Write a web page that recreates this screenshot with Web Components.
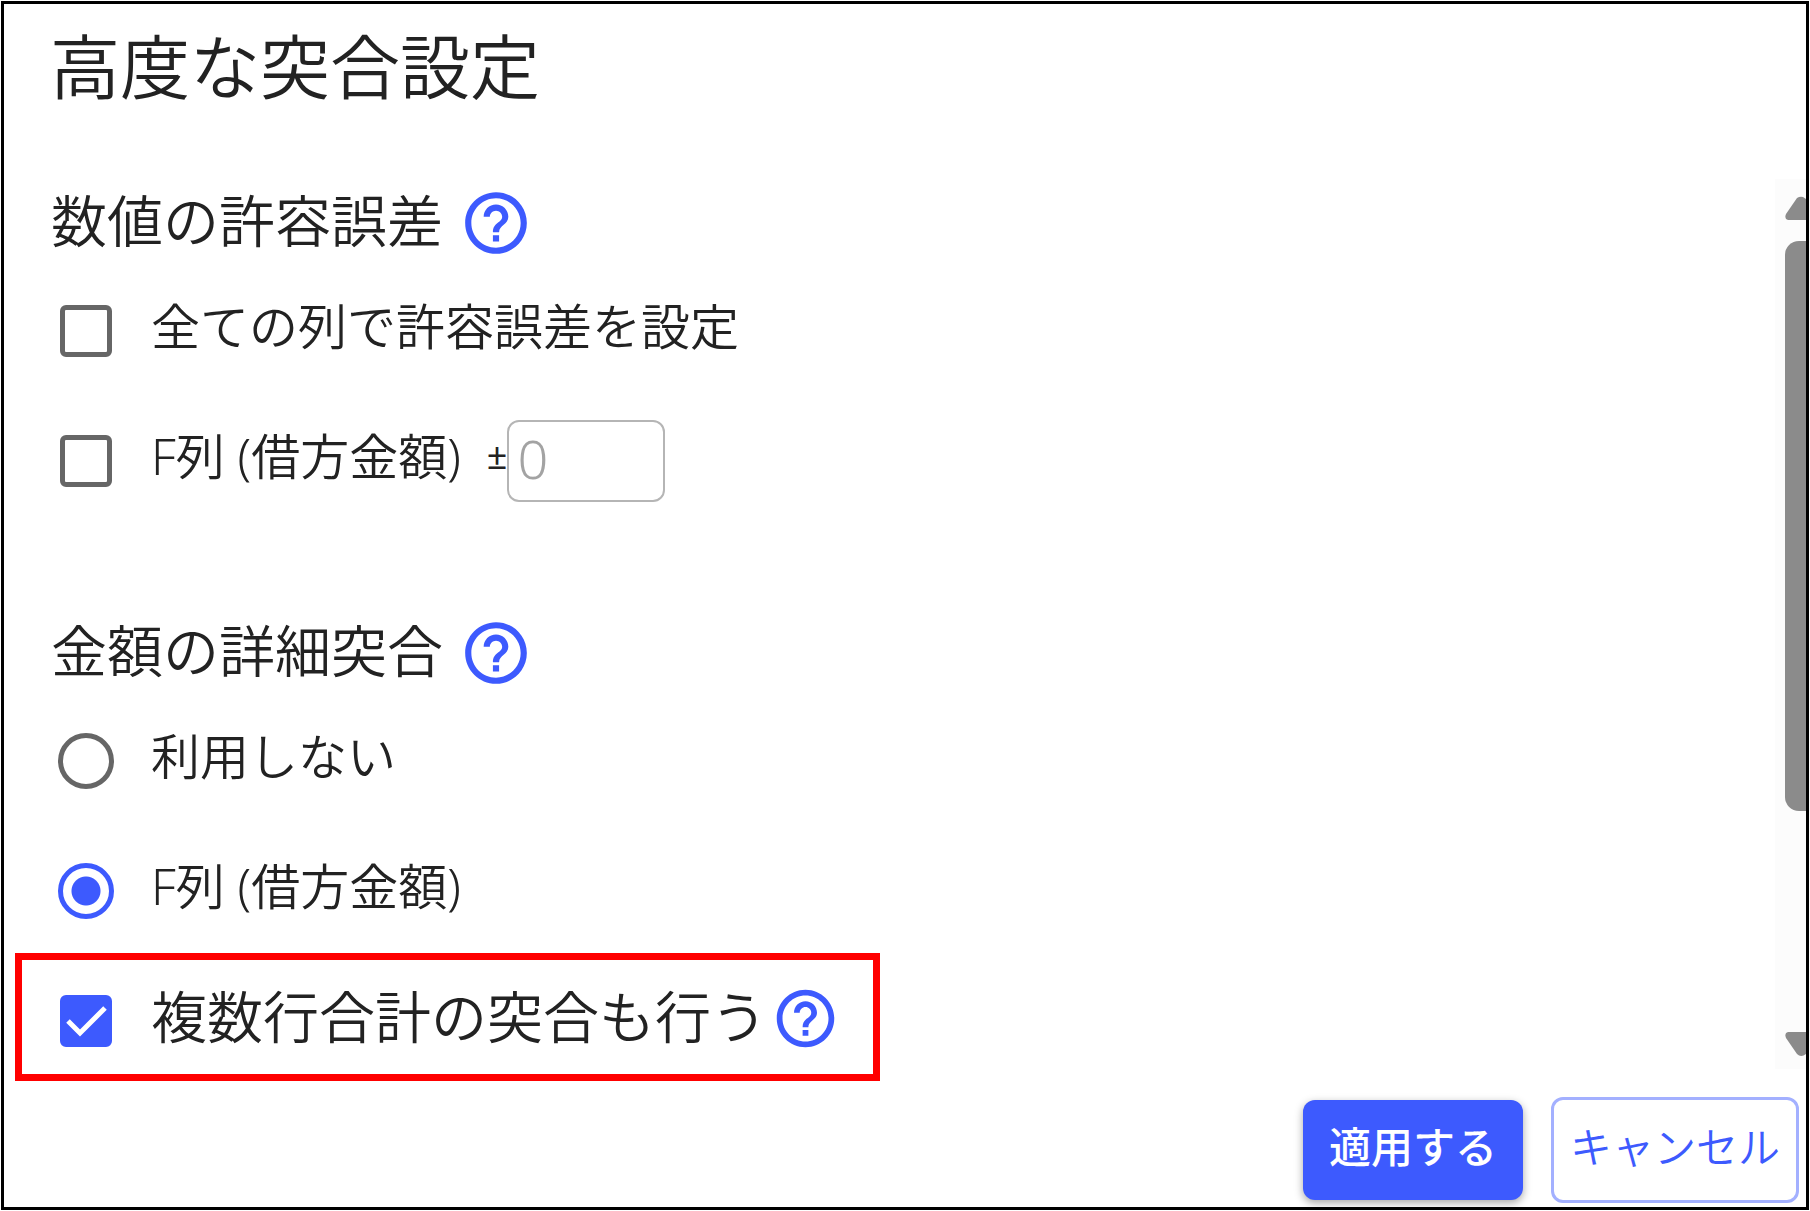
<!DOCTYPE html>
<html lang="ja">
<head>
<meta charset="utf-8">
<meta name="viewport" content="width=device-width, initial-scale=1">
<title>高度な突合設定</title>
<style>
    body {
        margin: 0;
        background: #fff;
        color: #222;
        font-family: "Noto Sans", "Noto Sans CJK JP", sans-serif;
        font-weight: 400;
        --accent: #3d5afe;
    }
</style>
</head>
<body>
<settings-dialog>
    <span slot="title">高度な突合設定</span>

    <settings-section heading="数値の許容誤差">
        <option-row type="checkbox">全ての列で許容誤差を設定</option-row>
        <option-row type="checkbox">F列 (借方金額)<tolerance-field slot="extra"></tolerance-field></option-row>
    </settings-section>

    <settings-section heading="金額の詳細突合">
        <option-row type="radio">利用しない</option-row>
        <option-row type="radio" checked>F列 (借方金額)</option-row>
        <option-row class="highlight" type="checkbox" checked>複数行合計の突合も行う<help-button slot="extra" small></help-button></option-row>
    </settings-section>

    <action-button slot="actions" variant="primary">適用する</action-button>
    <action-button slot="actions">キャンセル</action-button>
</settings-dialog>

<script>
class SettingsDialog extends HTMLElement {
    constructor() {
        super();
        this.attachShadow({ mode: 'open' });
    }

    connectedCallback() {
        this.shadowRoot.innerHTML = `
            <style>
                :host {
                    display: flex;
                    flex-direction: column;
                    box-sizing: border-box;
                    min-height: calc(100vh - 2px);
                    margin: 1px;
                    border: 3px solid #000;
                    background: #fff;
                }
                header { padding: 23px 46px 72px; }
                h1 {
                    margin: 0;
                    font-size: 70px;
                    line-height: 80px;
                    font-weight: 350;
                }
                .body { display: flex; }
                .content { flex: 1; min-width: 0; }
                footer {
                    display: flex;
                    justify-content: flex-end;
                    align-items: center;
                    gap: 28px;
                    padding: 16px 7px 3px;
                }
            </style>
            <header><h1><slot name="title"></slot></h1></header>
            <div class="body">
                <div class="content"><slot></slot></div>
                <scroll-rail></scroll-rail>
            </div>
            <footer><slot name="actions"></slot></footer>
        `;
    }
}

class ScrollRail extends HTMLElement {
    constructor() {
        super();
        this.attachShadow({ mode: 'open' });
    }

    connectedCallback() {
        this.setAttribute('aria-hidden', 'true');
        this.shadowRoot.innerHTML = `
            <style>
                :host {
                    display: flex;
                    flex-direction: column;
                    box-sizing: border-box;
                    width: 31px;
                    margin-bottom: 12px;
                    padding: 17px 0 13px 10px;
                    background: #fcfcfc;
                }
                svg { display: block; width: 21px; height: 24px; fill: #8b8b8b; }
                .track { flex: 1; padding: 21px 0; }
                .thumb {
                    height: 74%;
                    border-radius: 14px 0 0 14px;
                    background: #8b8b8b;
                }
            </style>
            <svg viewBox="0 0 21 24"><path d="M12 2Q15 0 18 1L21 3V24H3Q-1 23 1 18Z"/></svg>
            <div class="track"><div class="thumb"></div></div>
            <svg viewBox="0 0 21 24"><path d="M3 0H21V22Q16 26 12 22L1 6Q-1 1 3 0Z"/></svg>
        `;
    }
}

class SettingsSection extends HTMLElement {
    constructor() {
        super();
        this.attachShadow({ mode: 'open' });
    }

    connectedCallback() {
        this.shadowRoot.innerHTML = `
            <style>
                :host { display: block; }
                :host(:not(:first-of-type)) { margin-top: 83px; }
                .heading {
                    display: flex;
                    align-items: center;
                    gap: 16px;
                    height: 87px;
                    padding-left: 47px;
                }
                h2 {
                    margin: 0;
                    padding-bottom: 6px;
                    font-size: 56px;
                    line-height: 80px;
                    font-weight: 350;
                }
                ::slotted(.highlight) {
                    box-sizing: border-box;
                    width: fit-content;
                    height: 128px;
                    margin: -3px 0 0 11px;
                    padding: 8px 33px 0 36px;
                    border: 7px solid #f00;
                    font-size: 56px;
                }
            </style>
            <div class="heading"><h2></h2><help-button></help-button></div>
            <slot></slot>
        `;
        this.shadowRoot.querySelector('h2').textContent = this.getAttribute('heading');

        // radios live in separate shadow roots, so exclusivity is handled here
        this.addEventListener('option-change', (e) => {
            if (e.target.getAttribute('type') !== 'radio') return;
            this.querySelectorAll('option-row[type="radio"]').forEach((row) => {
                if (row !== e.target) row.checked = false;
            });
        });
    }
}

class OptionRow extends HTMLElement {
    constructor() {
        super();
        this.attachShadow({ mode: 'open' });
    }

    connectedCallback() {
        const type = this.getAttribute('type');
        this.shadowRoot.innerHTML = `
            <style>
                :host {
                    display: flex;
                    align-items: center;
                    height: 130px;
                    padding-left: 54px;
                    font-size: 49px;
                    line-height: 72px;
                    font-weight: 350;
                }
                .control { display: grid; flex: none; margin-right: 37px; }
                .control > * { grid-area: 1 / 1; place-self: center; }
                input {
                    appearance: none;
                    box-sizing: border-box;
                    width: 52px;
                    height: 52px;
                    margin: 2px;
                    border: 5px solid #666;
                    border-radius: 6px;
                    background: #fff;
                    cursor: pointer;
                }
                input:checked { border-color: var(--accent); background: var(--accent); }
                input[type="radio"] {
                    width: 56px;
                    height: 56px;
                    margin: 0;
                    border-radius: 50%;
                }
                input[type="radio"]:checked {
                    background: radial-gradient(circle, var(--accent) 14px, #fff 15px);
                }
                svg {
                    width: 52px;
                    height: 52px;
                    fill: none;
                    stroke: #fff;
                    stroke-width: 5;
                    pointer-events: none;
                    visibility: hidden;
                }
                input[type="checkbox"]:checked + svg { visibility: visible; }
                label { padding-bottom: 10px; cursor: pointer; white-space: nowrap; }
                ::slotted(help-button) { padding-bottom: 6px; }
            </style>
            <span class="control">
                <input type="${type}" id="input">
                <svg viewBox="0 0 52 52" aria-hidden="true"><path d="M8 26L20 38L45 13"/></svg>
            </span>
            <label for="input"><slot></slot></label>
            <slot name="extra"></slot>
        `;
        this._input = this.shadowRoot.getElementById('input');
        this._input.checked = this.hasAttribute('checked');
        this._input.addEventListener('change', () => {
            this.dispatchEvent(new CustomEvent('option-change', { bubbles: true, composed: true }));
        });
    }

    set checked(value) {
        this._input.checked = value;
    }
}

class ToleranceField extends HTMLElement {
    constructor() {
        super();
        this.attachShadow({ mode: 'open' });
    }

    connectedCallback() {
        this.shadowRoot.innerHTML = `
            <style>
                :host { display: flex; align-items: center; margin-left: 26px; }
                label { font-size: 36px; font-weight: 400; padding-bottom: 10px; line-height: 48px; }
                input {
                    box-sizing: border-box;
                    width: 158px;
                    height: 82px;
                    margin: 0;
                    padding: 0 8px 6px;
                    border: 2px solid #b5b5b5;
                    border-radius: 12px;
                    background: #fff;
                    font: inherit;
                    font-size: 54px;
                    color: #222;
                }
                input::placeholder { color: #a3a3a3; opacity: 1; }
            </style>
            <label for="value">±</label>
            <input type="text" id="value" inputmode="numeric" placeholder="0">
        `;
    }
}

class HelpButton extends HTMLElement {
    constructor() {
        super();
        this.attachShadow({ mode: 'open' });
    }

    connectedCallback() {
        this.shadowRoot.innerHTML = `
            <style>
                :host { display: block; --size: 74px; }
                :host([small]) { --size: 69px; margin-left: 4px; }
                button {
                    display: block;
                    padding: 0;
                    border: 0;
                    background: none;
                    color: var(--accent);
                    cursor: pointer;
                }
                svg { display: block; width: var(--size); height: var(--size); fill: currentColor; }
            </style>
            <button type="button" aria-label="ヘルプ">
                <svg viewBox="0 0 24 24" aria-hidden="true">
                    <path d="M11 18h2v-2h-2v2zm1-16C6.480 2 2 6.480 2 12s4.480 10 10 10 10-4.480 10-10S17.520 2 12 2zm0 18c-4.410 0-8-3.590-8-8s3.590-8 8-8 8 3.590 8 8-3.590 8-8 8zm0-14c-2.210 0-4 1.790-4 4h2c0-1.100.9-2 2-2s2 .9 2 2c0 2-3 1.750-3 5h2c0-2.250 3-2.500 3-5 0-2.210-1.790-4-4-4z"/>
                </svg>
            </button>
        `;
    }
}

class ActionButton extends HTMLElement {
    constructor() {
        super();
        this.attachShadow({ mode: 'open' });
    }

    connectedCallback() {
        this.shadowRoot.innerHTML = `
            <style>
                :host { display: block; }
                button {
                    display: block;
                    padding: 18px 16px 24px;
                    border: 3px solid #a3b0ff;
                    border-radius: 12px;
                    background: #fff;
                    color: var(--accent);
                    font: inherit;
                    font-weight: 350;
                    font-size: 42px;
                    line-height: 58px;
                    white-space: nowrap;
                    cursor: pointer;
                }
                :host([variant="primary"]) button {
                    padding: 18px 26px 24px;
                    border: 0;
                    background: var(--accent);
                    color: #fff;
                    font-weight: 500;
                    box-shadow: 0 3px 8px rgba(0,0,0,0.35);
                }
            </style>
            <button type="button"><slot></slot></button>
        `;
    }
}

customElements.define('settings-dialog', SettingsDialog);
customElements.define('scroll-rail', ScrollRail);
customElements.define('settings-section', SettingsSection);
customElements.define('option-row', OptionRow);
customElements.define('tolerance-field', ToleranceField);
customElements.define('help-button', HelpButton);
customElements.define('action-button', ActionButton);
</script>
</body>
</html>
